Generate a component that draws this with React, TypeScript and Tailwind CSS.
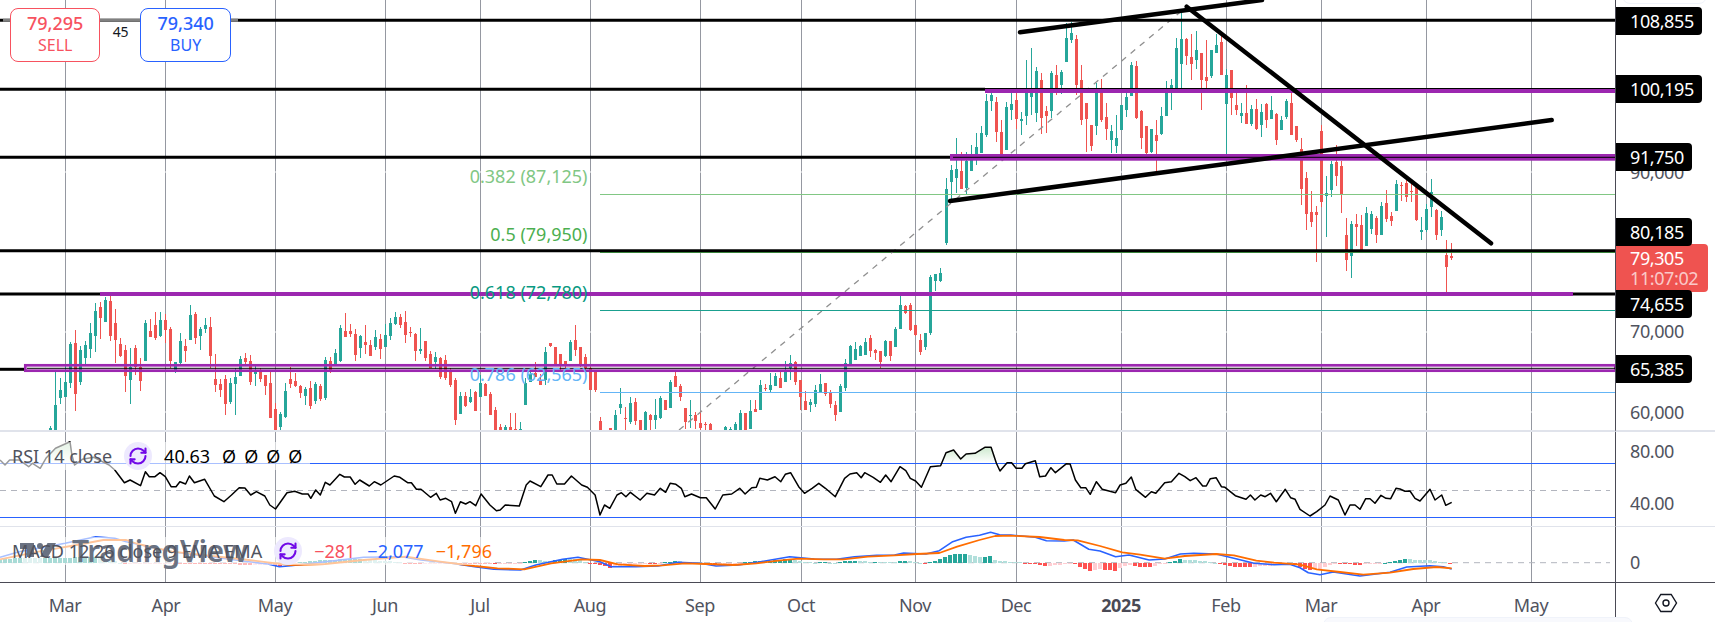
import React from 'react';
import { RefreshCw } from 'lucide-react';

type Row = [number, number, number, number, number, number];
type Pt = [number, number];

const GREEN = '#26a69a';
const RED = '#ef5350';
const PURPLE = '#9c27b0';

const gridX = [65, 165, 275, 385, 480, 590, 700, 801, 915, 1016, 1121, 1226, 1321, 1426, 1531];

// candles read off the chart as [x, up, bodyTop, bodyBottom, wickTop, wickBottom]
const seg1: Row[] = [
  [151, 1, 445, 450, 437, 450], [166, 1, 375, 450, 275, 450], [181, 1, 330, 354, 293, 372], [196, 1, 306, 351, 252, 351],
  [211, 1, 192, 309, 186, 324], [226, 0, 189, 342, 150, 393], [241, 1, 210, 306, 198, 315], [256, 1, 195, 234, 183, 252],
  [271, 1, 159, 207, 129, 234], [286, 1, 93, 168, 69, 216], [301, 0, 81, 114, 66, 177], [316, 1, 60, 126, 50, 126],
  [331, 0, 63, 168, 48, 183], [346, 0, 129, 180, 87, 249], [361, 0, 192, 228, 174, 231], [376, 0, 210, 288, 195, 336],
  [391, 1, 261, 300, 204, 372], [406, 0, 204, 261, 195, 285], [421, 0, 261, 303, 234, 333], [436, 1, 129, 243, 120, 243],
  [451, 0, 153, 171, 117, 171], [466, 0, 135, 174, 96, 180], [481, 1, 120, 168, 96, 171], [496, 0, 120, 150, 102, 189],
  [511, 0, 147, 243, 141, 264], [526, 1, 246, 276, 246, 279], [541, 1, 183, 249, 159, 252], [556, 0, 198, 213, 177, 246],
  [571, 1, 105, 180, 75, 180], [586, 0, 102, 174, 96, 192], [601, 1, 147, 168, 141, 210], [616, 1, 135, 147, 114, 159],
  [631, 0, 141, 228, 111, 264], [646, 0, 297, 315, 222, 336], [661, 0, 312, 330, 297, 351], [676, 0, 297, 372, 285, 405],
  [691, 1, 309, 366, 294, 372], [706, 1, 291, 312, 264, 405], [721, 1, 237, 288, 228, 288], [736, 0, 234, 246, 219, 258],
  [751, 0, 243, 306, 225, 315], [766, 1, 276, 282, 258, 318], [781, 0, 276, 297, 264, 306], [796, 0, 285, 318, 285, 345],
  [811, 0, 309, 414, 270, 414], [826, 0, 387, 450, 369, 450], [841, 1, 402, 441, 396, 450], [856, 1, 333, 411, 309, 414],
  [871, 0, 297, 312, 261, 324], [886, 0, 303, 318, 279, 321], [901, 0, 318, 339, 315, 354], [916, 1, 327, 348, 321, 375],
  [931, 0, 324, 378, 303, 387], [946, 1, 312, 363, 306, 372], [961, 0, 318, 357, 312, 363], [976, 1, 240, 354, 231, 360],
  [991, 0, 243, 270, 231, 279], [1006, 1, 219, 258, 207, 258], [1021, 1, 144, 243, 135, 246], [1036, 0, 153, 171, 99, 171],
  [1051, 0, 153, 162, 132, 171], [1066, 0, 162, 225, 147, 243], [1081, 1, 168, 204, 165, 234], [1096, 0, 186, 195, 135, 222],
  [1111, 0, 195, 228, 180, 228], [1126, 1, 171, 201, 150, 210], [1141, 0, 177, 207, 162, 237], [1156, 1, 165, 201, 132, 201],
  [1171, 1, 129, 168, 114, 180], [1186, 1, 111, 132, 96, 135], [1201, 0, 111, 135, 102, 144], [1216, 0, 126, 165, 93, 189],
  [1231, 0, 156, 159, 141, 171], [1246, 0, 162, 213, 159, 243], [1261, 1, 207, 213, 144, 222], [1276, 0, 183, 234, 183, 243],
  [1291, 0, 222, 264, 213, 264], [1306, 1, 231, 246, 216, 267], [1321, 0, 234, 291, 231, 297], [1336, 0, 240, 295, 225, 300],
];
const seg2: Row[] = [
  [1, 0, 420, 465, 415, 470], [16, 0, 450, 570, 445, 585], [31, 1, 498, 552, 486, 552], [46, 0, 498, 528, 486, 531],
  [61, 1, 501, 516, 477, 519], [76, 0, 486, 543, 483, 543], [91, 1, 459, 501, 435, 501], [106, 0, 462, 498, 459, 498],
  [121, 0, 492, 555, 486, 555], [136, 0, 540, 600, 531, 600], [151, 0, 590, 600, 582, 600], [166, 1, 591, 600, 585, 600],
  [181, 0, 591, 600, 549, 600], [196, 0, 598, 600, 549, 600], [211, 1, 598, 600, 576, 600], [226, 1, 459, 525, 444, 525],
  [241, 1, 432, 456, 420, 456], [256, 0, 430, 440, 396, 440], [271, 0, 450, 465, 432, 465], [286, 1, 366, 450, 351, 465],
  [301, 0, 339, 348, 339, 351], [316, 0, 351, 408, 351, 408], [331, 0, 372, 408, 372, 420], [346, 0, 393, 408, 393, 420],
  [361, 1, 336, 393, 330, 393], [376, 0, 330, 360, 285, 378], [391, 0, 351, 408, 351, 411], [406, 0, 381, 414, 372, 450],
  [421, 0, 414, 480, 410, 480], [436, 0, 423, 480, 420, 486], [451, 0, 573, 600, 561, 600], [481, 0, 594, 600, 594, 600],
  [496, 1, 555, 600, 540, 600], [511, 1, 522, 534, 474, 552], [526, 0, 564, 566, 530, 600], [541, 1, 519, 576, 501, 582],
  [556, 0, 516, 573, 504, 585], [571, 0, 570, 600, 570, 600], [586, 1, 546, 600, 543, 600], [601, 0, 555, 570, 552, 600],
  [616, 1, 555, 570, 507, 597], [631, 1, 504, 564, 498, 567], [646, 0, 510, 540, 510, 540], [661, 1, 456, 534, 450, 534],
  [676, 0, 438, 471, 426, 471], [691, 0, 468, 501, 462, 513], [706, 0, 534, 576, 534, 597], [721, 1, 555, 558, 510, 594],
  [736, 0, 555, 573, 546, 597], [751, 0, 579, 594, 543, 600], [766, 0, 582, 585, 576, 600], [781, 0, 582, 600, 579, 600],
  [826, 1, 591, 600, 588, 600], [841, 1, 597, 600, 591, 600], [856, 1, 582, 600, 576, 600], [871, 1, 549, 600, 540, 600],
  [886, 0, 549, 600, 549, 600], [901, 1, 543, 597, 510, 597], [916, 0, 537, 546, 510, 546], [931, 1, 465, 540, 450, 540],
  [946, 0, 474, 477, 462, 483], [961, 1, 465, 480, 430, 486], [976, 1, 438, 468, 430, 468], [991, 0, 444, 474, 420, 474],
  [1006, 1, 423, 456, 393, 456], [1021, 1, 399, 414, 375, 450], [1036, 0, 396, 456, 393, 465], [1051, 0, 450, 501, 450, 540],
  [1066, 0, 513, 540, 483, 540], [1081, 1, 516, 525, 507, 546], [1096, 1, 480, 522, 465, 531], [1111, 1, 462, 486, 432, 486],
  [1126, 0, 459, 492, 459, 498], [1141, 0, 486, 522, 480, 534], [1156, 0, 525, 555, 513, 573], [1171, 1, 468, 546, 462, 546],
  [1186, 1, 399, 474, 387, 483], [1201, 1, 348, 402, 345, 402], [1216, 1, 357, 390, 336, 390], [1231, 1, 348, 378, 345, 378],
  [1246, 1, 336, 375, 324, 375], [1261, 0, 324, 363, 315, 381], [1276, 0, 360, 369, 357, 390], [1291, 0, 363, 396, 363, 414],
  [1306, 1, 333, 378, 330, 381], [1321, 0, 333, 378, 333, 393], [1336, 1, 297, 351, 291, 351], [1351, 1, 225, 297, 198, 297],
  [1366, 0, 228, 249, 225, 252], [1381, 0, 225, 300, 219, 303], [1396, 0, 285, 315, 285, 318], [1411, 0, 330, 366, 312, 375],
  [1426, 1, 309, 351, 309, 360], [1441, 1, 141, 309, 135, 315], [1456, 1, 132, 153, 132, 183], [1471, 1, 129, 153, 114, 156],
];
const seg3: Row[] = [
  [139, 1, 567, 729, 535, 735], [154, 1, 510, 546, 495, 600], [169, 1, 507, 534, 414, 580], [184, 0, 513, 567, 456, 567],
  [199, 1, 483, 565, 456, 582], [214, 1, 462, 513, 435, 513], [229, 1, 441, 465, 399, 495], [244, 1, 399, 459, 378, 459],
  [259, 1, 303, 405, 282, 411], [274, 1, 285, 303, 276, 333], [289, 0, 306, 396, 291, 426], [304, 0, 396, 465, 360, 465],
  [319, 1, 321, 450, 306, 450], [334, 1, 312, 330, 279, 360], [349, 0, 300, 357, 279, 387], [364, 1, 357, 363, 336, 405],
  [379, 1, 279, 348, 180, 375], [394, 1, 279, 291, 144, 345], [409, 1, 213, 339, 201, 366], [424, 0, 240, 354, 219, 402],
  [439, 0, 333, 348, 318, 399], [454, 1, 219, 333, 213, 354], [469, 0, 225, 270, 195, 285], [484, 1, 216, 255, 210, 282],
  [499, 1, 114, 186, 69, 186], [514, 1, 99, 120, 66, 129], [529, 0, 117, 255, 105, 285], [544, 0, 240, 360, 195, 375],
  [559, 0, 309, 357, 309, 456], [574, 0, 375, 438, 375, 453], [589, 1, 279, 378, 249, 405], [604, 0, 267, 360, 237, 366],
  [619, 0, 351, 387, 309, 420], [634, 1, 393, 420, 375, 460], [649, 1, 414, 438, 345, 460], [664, 1, 315, 390, 315, 390],
  [679, 1, 291, 330, 279, 351], [694, 1, 195, 288, 186, 288], [709, 0, 198, 354, 183, 357], [724, 0, 333, 414, 330, 447],
  [739, 0, 378, 460, 378, 462], [754, 1, 387, 456, 387, 460], [769, 0, 405, 423, 360, 516], [784, 1, 348, 402, 321, 405],
  [799, 1, 279, 348, 243, 348], [814, 1, 255, 264, 237, 330], [829, 1, 144, 264, 114, 264], [844, 1, 117, 192, 30, 264],
  [859, 0, 117, 168, 114, 195], [874, 0, 171, 192, 102, 240], [889, 1, 150, 180, 93, 207], [904, 0, 159, 240, 159, 330],
  [919, 0, 231, 243, 120, 264], [934, 1, 150, 228, 150, 234], [949, 1, 135, 159, 102, 159], [964, 0, 126, 225, 108, 225],
  [979, 1, 225, 312, 207, 462], [994, 0, 210, 294, 210, 345], [1009, 0, 315, 330, 279, 345], [1024, 1, 339, 348, 309, 369],
  [1039, 0, 339, 372, 255, 372], [1054, 1, 327, 372, 315, 378], [1069, 0, 327, 387, 297, 390], [1084, 1, 336, 375, 312, 411],
  [1099, 0, 312, 360, 309, 384], [1114, 1, 330, 357, 288, 357], [1129, 0, 342, 420, 339, 435], [1144, 1, 360, 390, 348, 390],
  [1159, 1, 303, 351, 297, 357], [1174, 0, 309, 405, 270, 405], [1189, 0, 378, 420, 378, 426],
];
const seg4: Row[] = [
  [4, 0, 27, 147, -6, 195], [19, 0, 114, 222, 96, 270], [34, 0, 216, 246, 153, 261], [49, 0, 216, 225, 198, 366],
  [64, 0, -27, 186, -45, 200], [79, 1, 159, 168, 108, 291], [94, 1, 72, 150, 63, 171], [109, 0, 66, 108, 15, 138],
  [124, 0, 78, 162, 63, 219], [139, 0, 285, 360, 234, 393], [154, 1, 252, 348, 243, 414], [169, 0, 252, 261, 222, 318],
  [184, 0, 255, 330, 225, 330], [199, 1, 219, 318, 201, 318], [214, 1, 222, 267, 213, 282], [229, 0, 234, 285, 228, 309],
  [244, 1, 198, 285, 186, 285], [259, 0, 189, 237, 150, 246], [274, 0, 228, 243, 216, 258], [289, 1, 132, 213, 120, 213],
  [304, 0, 135, 138, 126, 183], [319, 0, 129, 171, 120, 186], [334, 0, 153, 156, 126, 186], [349, 0, 140, 240, 135, 243],
  [364, 1, 270, 276, 231, 300], [379, 1, 207, 270, 192, 276], [394, 1, 156, 201, 117, 231], [409, 0, 210, 285, 207, 300],
  [424, 1, 231, 270, 213, 288], [439, 0, 345, 381, 300, 456], [454, 0, 348, 354, 309, 360],
];

const place = (rows: Row[], x0: number, y0: number) =>
  rows.map(([x, up, bt, bb, wt, wb]) => ({
    x: Math.round(x0 + x / 3),
    up,
    bt: y0 + bt / 3,
    bb: y0 + bb / 3,
    wt: y0 + wt / 3,
    wb: y0 + wb / 3,
  }));

const candles = [
  ...place(seg1, 0, 280),
  ...place(seg2, 450, 230),
  ...place(seg3, 900, 0),
  ...place(seg4, 1300, 140),
];

const pts = (x0: number, sx: number, y0: number, raw: Pt[]): Pt[] =>
  raw.map(([x, y]) => [x0 + x / sx, y0 + y / 3]);

const rsi: Pt[] = [
  ...pts(0, 2.613, 420, [[0, 120], [13, 135], [25, 120], [50, 120], [75, 140], [85, 130], [105, 145], [120, 115], [145, 85], [183, 65], [188, 105], [195, 135], [215, 118], [245, 112], [285, 135], [300, 150], [325, 188], [340, 180], [367, 197], [380, 155], [390, 170], [405, 170], [418, 158], [432, 170], [447, 200], [460, 200], [470, 185], [485, 192], [495, 168], [508, 188], [535, 178], [560, 228], [585, 245], [605, 225], [625, 203], [640, 204], [655, 225], [670, 215], [692, 228], [705, 255], [720, 267], [750, 218], [770, 214], [790, 222], [805, 222], [812, 235], [825, 210], [837, 225], [850, 187], [862, 195], [888, 163], [900, 171], [915, 171], [928, 193], [940, 180], [965, 198], [978, 185], [995, 195], [1030, 168], [1045, 172], [1065, 188], [1075, 188], [1088, 208], [1100, 208], [1125, 232], [1140, 220], [1150, 240], [1165, 235], [1180, 245], [1190, 280], [1203, 245], [1217, 252], [1228, 245], [1243, 257], [1257, 222], [1280, 255], [1297, 272], [1307, 270], [1320, 255], [1357, 258], [1375, 195], [1385, 183], [1413, 200], [1432, 165], [1443, 165], [1455, 192], [1475, 192], [1493, 168], [1520, 195], [1535, 202], [1555, 225]]),
  ...pts(600, 2.24, 430, [[0, 255], [10, 225], [22, 235], [38, 195], [48, 188], [58, 200], [68, 187], [90, 210], [105, 190], [122, 195], [135, 175], [147, 187], [157, 160], [170, 163], [182, 175], [190, 200], [205, 192], [225, 203], [238, 203], [258, 237], [275, 195], [295, 192], [313, 175], [325, 192], [340, 173], [350, 172], [358, 145], [375, 150], [392, 140], [405, 155], [415, 133], [427, 128], [445, 170], [458, 190], [475, 175], [490, 160], [505, 175], [527, 200], [548, 145], [560, 132], [575, 128], [585, 143], [593, 128], [612, 142], [628, 157], [640, 135], [652, 155], [672, 110], [685, 122], [695, 145], [707, 153], [720, 172], [740, 110], [763, 107], [775, 68], [792, 60], [808, 87], [820, 72], [840, 70], [862, 52], [876, 52], [888, 100], [896, 123], [912, 98], [922, 98], [932, 115], [945, 115], [953, 101], [975, 92], [985, 140], [998, 138], [1010, 113], [1020, 128], [1045, 101], [1053, 102], [1065, 150], [1077, 173], [1088, 173], [1098, 193], [1112, 155], [1125, 178], [1155, 188], [1165, 165], [1178, 160], [1190, 141], [1200, 178], [1222, 202], [1235, 185], [1245, 190], [1265, 158], [1280, 155], [1297, 130], [1310, 140], [1322, 152], [1335, 143], [1350, 168], [1358, 168], [1367, 146], [1380, 143], [1392, 170], [1400, 172], [1423, 197], [1447, 208], [1457, 195], [1467, 210], [1480, 195], [1490, 200], [1502, 190], [1515, 215], [1535, 178], [1547, 203], [1557, 208]]),
  ...pts(1300, 3, 420, [[0, 268], [30, 288], [50, 275], [75, 255], [90, 228], [115, 240], [135, 285], [150, 255], [165, 255], [180, 268], [197, 236], [210, 236], [225, 250], [243, 226], [258, 235], [272, 236], [288, 205], [300, 207], [315, 214], [330, 213], [345, 235], [360, 243], [390, 208], [405, 240], [425, 225], [437, 256], [455, 247]]),
];

const macd: Pt[] = [
  ...pts(0, 2.613, 420, [[0, 412], [50, 395], [100, 385], [170, 370], [250, 350], [300, 355], [330, 365], [450, 395], [650, 425], [700, 432], [730, 440], [760, 437], [850, 425], [950, 412], [1050, 410], [1100, 420], [1180, 430], [1240, 440], [1290, 448], [1360, 450], [1400, 435], [1470, 418], [1510, 412]]),
  ...pts(600, 2.24, 430, [[0, 395], [25, 410], [80, 410], [130, 408], [175, 397], [225, 400], [260, 408], [310, 405], [360, 395], [425, 380], [480, 387], [530, 388], [570, 380], [620, 376], [660, 375], [680, 369], [730, 372], [760, 362], [790, 335], [820, 322], [850, 316], [875, 307], [895, 314], [920, 315], [975, 322], [1000, 332], [1040, 333], [1060, 330], [1095, 358], [1120, 363], [1155, 380], [1185, 375], [1230, 390], [1265, 387], [1300, 372], [1330, 370], [1380, 372], [1420, 385], [1465, 400], [1510, 404], [1545, 403]]),
  ...pts(1300, 3, 420, [[0, 443], [25, 458], [60, 464], [100, 456], [180, 468], [270, 457], [320, 441], [390, 437], [430, 440], [455, 447]]),
];

const signal: Pt[] = [
  ...pts(0, 2.613, 420, [[0, 418], [100, 395], [200, 375], [270, 360], [330, 360], [360, 372], [450, 395], [650, 420], [700, 427], [760, 435], [850, 432], [950, 420], [1060, 410], [1150, 425], [1240, 438], [1300, 445], [1370, 448], [1440, 430], [1520, 418]]),
  ...pts(600, 2.24, 430, [[0, 390], [40, 403], [100, 408], [140, 406], [190, 400], [240, 402], [300, 405], [350, 400], [400, 392], [445, 386], [500, 388], [545, 388], [600, 380], [660, 376], [710, 372], [760, 369], [800, 350], [850, 330], [885, 318], [920, 317], [985, 321], [1040, 330], [1070, 331], [1120, 348], [1170, 367], [1210, 374], [1265, 386], [1310, 378], [1380, 372], [1420, 376], [1470, 392], [1510, 398]]),
  ...pts(1300, 3, 420, [[0, 434], [50, 448], [120, 456], [190, 464], [270, 458], [340, 447], [410, 441], [455, 445]]),
];

const at = (line: Pt[], x: number) => {
  for (let i = 1; i < line.length; i++) {
    if (x <= line[i][0]) {
      const [x1, y1] = line[i - 1];
      const [x2, y2] = line[i];
      return y1 + ((y2 - y1) * (x - x1)) / (x2 - x1);
    }
  }
  return line[line.length - 1][1];
};

const ZERO = 562.7;
const histogram: { x: number; h: number; fill: string }[] = [];
for (let x = 0.3; x < 1452; x += 5) {
  const h = (at(signal, x) - at(macd, x)) * 1.3;
  const prev = (at(signal, x - 5) - at(macd, x - 5)) * 1.3;
  const fill = h >= 0 ? (h > prev ? GREEN : '#b2dfdb') : h < prev ? '#ff5252' : '#ffcdd2';
  histogram.push({ x, h, fill });
}

const poly = (line: Pt[]) => line.map(([x, y]) => `${x.toFixed(1)},${y.toFixed(1)}`).join(' ');

const Pane = ({ top, height, children }: { top: number; height: number; children: React.ReactNode }) => (
  <svg className="block w-full h-full" viewBox={`0 ${top} 1615 ${height}`} preserveAspectRatio="none">
    {gridX.map((x) => (
      <line key={x} x1={x + 0.5} x2={x + 0.5} y1={top} y2={top + height} stroke="#9598a1" />
    ))}
    {children}
  </svg>
);

const FibLabel = ({ y, fill, children }: { y: number; fill: string; children: string }) => (
  <text x={587.5} y={y} textAnchor="end" dominantBaseline="central" fill={fill} className="text-lg tracking-normal">
    {children}
  </text>
);

const MainChart = () => (
  <Pane top={0} height={430}>
    {[172, 332, 412].map((y) => (
      <line key={y} x1={0} x2={1615} y1={y} y2={y} stroke="#ffffff" />
    ))}
    <g shapeRendering="crispEdges">
      {candles.map((c, i) => (
        <g key={i} fill={c.up ? GREEN : RED}>
          <rect x={c.x} y={c.wt} width={1} height={Math.max(c.wb - c.wt, 1)} />
          <rect x={c.x - 1} y={c.bt} width={3} height={Math.max(c.bb - c.bt, 1)} />
        </g>
      ))}
    </g>

    <line x1={600} x2={1615} y1={194.5} y2={194.5} stroke="#81c784" strokeWidth={1.2} />
    <line x1={600} x2={1615} y1={252.5} y2={252.5} stroke="#4caf50" strokeWidth={1.2} />
    <line x1={600} x2={1615} y1={310.5} y2={310.5} stroke="#1aa08f" strokeWidth={1.2} />
    <line x1={600} x2={1615} y1={392.5} y2={392.5} stroke="#64b5f6" strokeWidth={1.2} />
    <line x1={679} y1={430} x2={1186.7} y2={6.7} stroke="#8f8f8f" strokeWidth={1.3} strokeDasharray="6 6" />

    <rect x={985} y={89} width={630} height={4} fill={PURPLE} />
    <rect x={950} y={154} width={665} height={6.7} fill={PURPLE} />
    <rect x={100} y={292} width={1473} height={4} fill={PURPLE} />
    <rect x={25.3} y={365.3} width={1590} height={5.4} fill="none" stroke={PURPLE} strokeWidth={2.7} />

    <line x1={0} x2={1615} y1={20.3} y2={20.3} stroke="#000" strokeWidth={3} />
    <line x1={3} x2={238} y1={20.3} y2={20.3} stroke="#808080" strokeWidth={3} />
    <line x1={0} x2={985} y1={89.3} y2={89.3} stroke="#000" strokeWidth={3} />
    <line x1={985} x2={1615} y1={88.5} y2={88.5} stroke="#000" strokeWidth={1.2} />
    <line x1={0} x2={950} y1={157.3} y2={157.3} stroke="#000" strokeWidth={3} />
    <line x1={953} x2={1615} y1={157.3} y2={157.3} stroke="#000" strokeWidth={1} />
    <line x1={0} x2={1615} y1={250.7} y2={250.7} stroke="#000" strokeWidth={3} />
    <line x1={0} x2={100} y1={294} y2={294} stroke="#000" strokeWidth={3} />
    <line x1={1573} x2={1615} y1={294} y2={294} stroke="#000" strokeWidth={3} />
    <line x1={0} x2={24} y1={369.3} y2={369.3} stroke="#000" strokeWidth={3} />
    <line x1={27} x2={1615} y1={368.3} y2={368.3} stroke="#000" strokeWidth={1} />

    <g stroke="#000" strokeWidth={4.5} strokeLinecap="round">
      <line x1={1020} y1={32.3} x2={1262} y2={0} />
      <line x1={1186.7} y1={6.7} x2={1491} y2={243.3} />
      <line x1={950} y1={201} x2={1551.7} y2={120} />
    </g>

    <FibLabel y={176} fill="#81c784">0.382 (87,125)</FibLabel>
    <FibLabel y={233.5} fill="#4caf50">0.5 (79,950)</FibLabel>
    <FibLabel y={292} fill="#089981">0.618 (72,780)</FibLabel>
    <FibLabel y={374} fill="#64b5f6">0.786 (62,565)</FibLabel>
  </Pane>
);

const RsiChart = () => {
  const area = `M${poly(rsi)} L1450,463.3 L0,463.3 Z`;
  return (
    <Pane top={432} height={94}>
      <defs>
        <linearGradient id="overbought" gradientUnits="userSpaceOnUse" x1={0} x2={0} y1={440} y2={463}>
          <stop offset="0" stopColor="#b7dfb9" />
          <stop offset="1" stopColor="#ffffff" />
        </linearGradient>
        <clipPath id="above70">
          <rect x={0} y={432} width={1615} height={31.3} />
        </clipPath>
      </defs>
      <path d={area} fill="url(#overbought)" clipPath="url(#above70)" />
      <line x1={0} x2={1615} y1={463.5} y2={463.5} stroke="#2962ff" strokeWidth={1.2} />
      <line x1={0} x2={1610} y1={490.5} y2={490.5} stroke="#b2b5be" strokeDasharray="6 5" />
      <line x1={0} x2={1615} y1={517.5} y2={517.5} stroke="#2962ff" strokeWidth={1.2} />
      <polyline points={poly(rsi)} fill="none" stroke="#000" strokeWidth={1.5} strokeLinejoin="round" />
    </Pane>
  );
};

const MacdChart = () => (
  <Pane top={527} height={55}>
    <line x1={0} x2={1610} y1={ZERO} y2={ZERO} stroke="#b2b5be" strokeDasharray="6 5" />
    <g shapeRendering="crispEdges">
      {histogram.map((b) => (
        <rect
          key={b.x}
          x={b.x - 2}
          y={b.h > 0 ? ZERO - b.h : ZERO}
          width={4}
          height={Math.max(Math.abs(b.h), 1)}
          fill={b.fill}
        />
      ))}
    </g>
    <polyline points={poly(macd)} fill="none" stroke="#2962ff" strokeWidth={1.6} strokeLinejoin="round" />
    <polyline points={poly(signal)} fill="none" stroke="#ff6d00" strokeWidth={1.8} strokeLinejoin="round" />
  </Pane>
);

const SyncBadge = () => (
  <span className="flex size-7 shrink-0 items-center justify-center rounded-full bg-violet-100">
    <RefreshCw className="size-5 text-violet-700" strokeWidth={2.5} />
  </span>
);

const priceTags = [
  { label: '108,855', y: 21 },
  { label: '100,195', y: 89 },
  { label: '91,750', y: 157 },
  { label: '80,185', y: 232 },
  { label: '74,655', y: 304 },
  { label: '65,385', y: 369 },
];

const PriceTick = ({ y, children }: { y: number; children: string }) => (
  <span className="absolute left-3.5 -translate-y-1/2 text-lg text-[#50535e]" style={{ top: y }}>
    {children}
  </span>
);

const timeLabels: [string, number][] = [
  ['Mar', 65], ['Apr', 166], ['May', 275], ['Jun', 385], ['Jul', 480], ['Aug', 590], ['Sep', 700], ['Oct', 801],
  ['Nov', 915], ['Dec', 1016], ['2025', 1121], ['Feb', 1226], ['Mar', 1321], ['Apr', 1426], ['May', 1531],
];

const TradeBox = ({ price, label, tone }: { price: string; label: string; tone: string }) => (
  <div className={`flex flex-col items-center rounded-lg border bg-white px-4 py-1 text-lg leading-5 tracking-normal ${tone}`}>
    <span className="font-medium">{price}</span>
    <span className="text-base">{label}</span>
  </div>
);

export default function App() {
  return (
    <div className="relative grid h-screen w-screen grid-cols-[1fr_100px] grid-rows-[432px_95px_56px_1fr] overflow-hidden bg-white font-['Noto_Sans',sans-serif] tracking-tight">
      {/* main pane */}
      <div className="relative border-b-2 border-[#e0e3eb]">
        <MainChart />
        <div className="absolute left-2.5 top-2 flex items-start">
          <TradeBox price="79,295" label="SELL" tone="border-[#f7525f] text-[#f7525f]" />
          <span className="w-10 pt-3.5 text-center text-sm leading-5 text-[#131722]">45</span>
          <TradeBox price="79,340" label="BUY" tone="border-[#2962ff] text-[#2962ff]" />
        </div>
      </div>
      <div className="relative border-b-2 border-l border-b-[#e0e3eb] border-l-[#4a4a55]">
        <PriceTick y={172}>90,000</PriceTick>
        <PriceTick y={331}>70,000</PriceTick>
        <PriceTick y={412}>60,000</PriceTick>
        <div className="absolute left-0 top-[244px] flex flex-col rounded-r bg-[#ef5350] py-1 pl-3.5 pr-2.5 text-lg leading-5 text-white">
          <span>79,305</span>
          <span className="text-white/70">11:07:02</span>
        </div>
        {priceTags.map((t) => (
          <span
            key={t.label}
            className="absolute left-0 -translate-y-1/2 rounded-r bg-black pl-3.5 pr-2 text-lg leading-7 text-white"
            style={{ top: t.y }}
          >
            {t.label}
          </span>
        ))}
      </div>

      {/* rsi pane */}
      <div className="relative border-b border-[#e0e3eb]">
        <RsiChart />
        <div className="absolute left-0 top-2.5 flex h-7 items-center gap-3 bg-white/60 pl-3 pr-2 text-lg tracking-normal">
          <span className="text-[#50535e]">RSI 14 close</span>
          <SyncBadge />
          <span className="text-black">40.63</span>
          <span className="flex gap-2 text-black">
            <span>Ø</span>
            <span>Ø</span>
            <span>Ø</span>
            <span>Ø</span>
          </span>
        </div>
      </div>
      <div className="relative border-b border-l border-b-[#e0e3eb] border-l-[#4a4a55]">
        <PriceTick y={19}>80.00</PriceTick>
        <PriceTick y={71}>40.00</PriceTick>
      </div>

      {/* macd pane */}
      <div className="relative border-b border-[#4a4a55]">
        <MacdChart />
        <div className="absolute left-0 top-2.5 h-7 w-[492px] bg-white/60" />
        <div className="absolute left-4 top-1.5 flex h-9 items-center gap-3 text-3xl font-semibold text-gray-500">
          <svg className="h-7 w-11 fill-gray-500" viewBox="0 0 36 28">
            <path d="M14 6H0v6h7v8h7V6Z" />
            <circle cx="20" cy="9" r="3" />
            <path d="M28 20h-8l7.5-14H36l-8 14Z" />
          </svg>
          <span>TradingView</span>
        </div>
        <div className="absolute left-3 top-2.5 flex h-7 items-center gap-3 text-lg tracking-normal">
          <span className="text-[#50535e]">MACD 12 26 close 9 EMA EMA</span>
          <SyncBadge />
          <span className="text-[#f7525f]">−281</span>
          <span className="text-[#2962ff]">−2,077</span>
          <span className="text-[#ff6d00]">−1,796</span>
        </div>
      </div>
      <div className="relative border-b border-l border-b-[#4a4a55] border-l-[#4a4a55]">
        <PriceTick y={35}>0</PriceTick>
      </div>

      {/* time axis */}
      <div className="relative">
        {timeLabels.map(([label, x]) => (
          <span
            key={`${label}${x}`}
            className={`absolute top-3 -translate-x-1/2 text-lg leading-5 ${label === '2025' ? 'font-bold text-[#4a4a55]' : 'text-[#50535e]'}`}
            style={{ left: x }}
          >
            {label}
          </span>
        ))}
      </div>
      <div className="flex items-center justify-center border-l border-[#4a4a55]">
        <svg className="size-6" viewBox="0 0 24 24" fill="none" stroke="#131722" strokeWidth={1.4}>
          <path d="M1.5 12 6.8 3.5h10.4L22.5 12l-5.3 8.5H6.8L1.5 12Z" />
          <circle cx="12" cy="12" r="3" />
        </svg>
      </div>

      {/* edges of the floating toolbars */}
      <div className="absolute left-[1622px] -top-3 h-4 w-[85px] rounded-lg border border-[#f0f3fa] bg-white" />
      <div className="absolute left-[1323px] top-[617px] h-8 w-[310px] rounded-lg border border-[#f0f3fa] bg-[#f8f9fd]" />
    </div>
  );
}
